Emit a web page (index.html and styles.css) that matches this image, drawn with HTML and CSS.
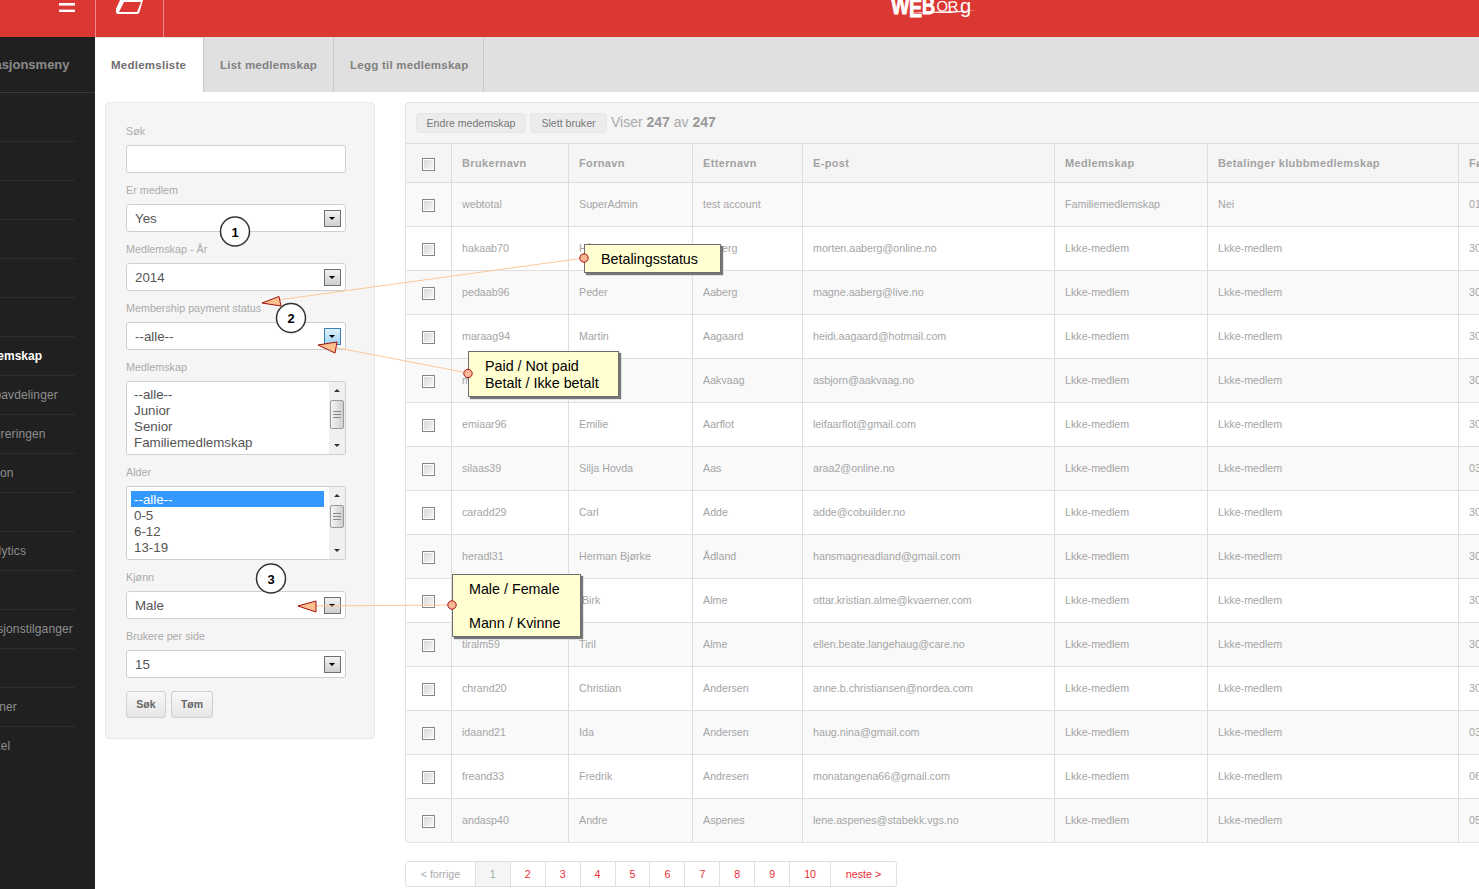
FILE: index.html
```html
<!DOCTYPE html>
<html lang="no">
<head>
<meta charset="utf-8">
<title>Medlemsliste</title>
<link rel="stylesheet" href="styles.css">
</head>
<body>
<div class="page">
  <header class="topbar">
    <div class="top-cell top-menu">
      <svg class="icon-menu" width="16" height="12" viewBox="0 0 16 12"><rect x="0" y="3" width="16" height="2.6" fill="#fff"/><rect x="0" y="9.6" width="16" height="2.6" fill="#fff"/></svg>
    </div>
    <div class="top-cell top-book">
      <svg width="27" height="14" viewBox="0 0 27 14"><path fill-rule="evenodd" d="M4 0 H27 L23.500 12 Q23 14 21 14 H2 Q0 14 0 12 V9 Z M8 2 L3 12 H21 L25 2 Z" fill="#fff"/></svg>
    </div>
    <svg class="logo" width="90" height="22" viewBox="0 0 90 22">
      <g class="logo-web">
        <text transform="translate(1,14) scale(.82,1)">W</text>
        <text transform="translate(19,17) scale(.82,1.1)">E</text>
        <text transform="translate(32,14) scale(.76,1)">B</text>
      </g>
      <g class="logo-org">
        <text transform="translate(47,12) rotate(-6)">O</text>
        <text transform="translate(58,12) rotate(-4)">R</text>
        <text class="logo-g" transform="translate(70,13)">g</text>
      </g>
      <path d="M15 12.500 L86 10.500 L60 13 Z" fill="#fff"/>
    </svg>
  </header>
  <div class="layout">
    <nav class="sidebar">
      <div class="side-title"><span class="side-title-text">Navigasjonsmeny</span></div>
      <ul class="side-list">
        <li class="side-item"></li>
        <li class="side-item"></li>
        <li class="side-item"></li>
        <li class="side-item"></li>
        <li class="side-item"></li>
        <li class="side-item"></li>
        <li class="side-item side-active">Medlemskap</li>
        <li class="side-item">Klubbavdelinger</li>
        <li class="side-item">Faktureringen</li>
        <li class="side-item">Seksjon</li>
        <li class="side-item"></li>
        <li class="side-item">&nbsp;&nbsp;Analytics</li>
        <li class="side-item"></li>
        <li class="side-item">Funksjonstilganger</li>
        <li class="side-item"></li>
        <li class="side-item">Kartoner</li>
        <li class="side-item side-last">Artikkel</li>
      </ul>
    </nav>
    <div class="content">
      <div class="tabs">
        <div class="tab tab-active">Medlemsliste</div>
        <div class="tab">List medlemskap</div>
        <div class="tab">Legg til medlemskap</div>
      </div>
      <div class="body-row">
        <form class="filter">
          <div class="label">Søk</div>
          <div class="input"></div>
          <div class="label">Er medlem</div>
          <div class="select"><span>Yes</span><i class="drop"></i></div>
          <div class="label">Medlemskap - År</div>
          <div class="select"><span>2014</span><i class="drop"></i></div>
          <div class="label">Membership payment status</div>
          <div class="select"><span>--alle--</span><i class="drop drop-hover"></i></div>
          <div class="label">Medlemskap</div>
          <div class="listbox">
            <div class="list-items">
              <div class="opt">--alle--</div>
              <div class="opt">Junior</div>
              <div class="opt">Senior</div>
              <div class="opt">Familiemedlemskap</div>
              <div class="opt">Trippelmedlemskap</div>
            </div>
            <div class="scroll"><b class="arr-up"></b><b class="thumb"></b><b class="arr-down"></b></div>
          </div>
          <div class="label">Alder</div>
          <div class="listbox">
            <div class="list-items">
              <div class="opt opt-sel">--alle--</div>
              <div class="opt">0-5</div>
              <div class="opt">6-12</div>
              <div class="opt">13-19</div>
              <div class="opt">20-39</div>
            </div>
            <div class="scroll"><b class="arr-up"></b><b class="thumb thumb-short"></b><b class="arr-down"></b></div>
          </div>
          <div class="label">Kjønn</div>
          <div class="select"><span>Male</span><i class="drop"></i></div>
          <div class="label">Brukere per side</div>
          <div class="select"><span>15</span><i class="drop"></i></div>
          <div class="btns">
            <div class="btn btn-sok">Søk</div>
            <div class="btn btn-tom">Tøm</div>
          </div>
        </form>
        <div class="main">
          <div class="panel">
            <div class="toolbar">
              <div class="tbtn tbtn-a">Endre medemskap</div>
              <div class="tbtn tbtn-b">Slett bruker</div>
              <div class="count">Viser <b>247</b> av <b>247</b></div>
            </div>
            <table class="grid">
              <colgroup>
                <col class="c0"><col class="c1"><col class="c2"><col class="c3"><col class="c4"><col class="c5"><col class="c6"><col class="c7">
              </colgroup>
              <thead>
                <tr><th><i class="cb"></i></th><th>Brukernavn</th><th>Fornavn</th><th>Etternavn</th><th>E-post</th><th>Medlemskap</th><th>Betalinger klubbmedlemskap</th><th>Fødselsdato</th></tr>
              </thead>
              <tbody>
                <tr><td><i class="cb"></i></td><td>webtotal</td><td>SuperAdmin</td><td>test account</td><td></td><td>Familiemedlemskap</td><td>Nei</td><td>01.01.1970</td></tr>
                <tr><td><i class="cb"></i></td><td>hakaab70</td><td>Håkon</td><td>Aaberg</td><td>morten.aaberg@online.no</td><td>Lkke-medlem</td><td>Lkke-medlem</td><td>30.06.2014</td></tr>
                <tr><td><i class="cb"></i></td><td>pedaab96</td><td>Peder</td><td>Aaberg</td><td>magne.aaberg@live.no</td><td>Lkke-medlem</td><td>Lkke-medlem</td><td>30.06.2014</td></tr>
                <tr><td><i class="cb"></i></td><td>maraag94</td><td>Martin</td><td>Aagaard</td><td>heidi.aagaard@hotmail.com</td><td>Lkke-medlem</td><td>Lkke-medlem</td><td>30.06.2014</td></tr>
                <tr><td><i class="cb"></i></td><td>maraak90</td><td>Asbjørn</td><td>Aakvaag</td><td>asbjorn@aakvaag.no</td><td>Lkke-medlem</td><td>Lkke-medlem</td><td>30.06.2014</td></tr>
                <tr><td><i class="cb"></i></td><td>emiaar96</td><td>Emilie</td><td>Aarflot</td><td>leifaarflot@gmail.com</td><td>Lkke-medlem</td><td>Lkke-medlem</td><td>30.06.2014</td></tr>
                <tr><td><i class="cb"></i></td><td>silaas39</td><td>Silja Hovda</td><td>Aas</td><td>araa2@online.no</td><td>Lkke-medlem</td><td>Lkke-medlem</td><td>03.06.2014</td></tr>
                <tr><td><i class="cb"></i></td><td>caradd29</td><td>Carl</td><td>Adde</td><td>adde@cobuilder.no</td><td>Lkke-medlem</td><td>Lkke-medlem</td><td>30.06.2014</td></tr>
                <tr><td><i class="cb"></i></td><td>heradl31</td><td>Herman Bjørke</td><td>Ådland</td><td>hansmagneadland@gmail.com</td><td>Lkke-medlem</td><td>Lkke-medlem</td><td>30.06.2014</td></tr>
                <tr><td><i class="cb"></i></td><td>biralm54</td><td>&nbsp;Birk</td><td>Alme</td><td>ottar.kristian.alme@kvaerner.com</td><td>Lkke-medlem</td><td>Lkke-medlem</td><td>30.06.2014</td></tr>
                <tr><td><i class="cb"></i></td><td>tiralm59</td><td>Tiril</td><td>Alme</td><td>ellen.beate.langehaug@care.no</td><td>Lkke-medlem</td><td>Lkke-medlem</td><td>30.06.2014</td></tr>
                <tr><td><i class="cb"></i></td><td>chrand20</td><td>Christian</td><td>Andersen</td><td>anne.b.christiansen@nordea.com</td><td>Lkke-medlem</td><td>Lkke-medlem</td><td>30.06.2014</td></tr>
                <tr><td><i class="cb"></i></td><td>idaand21</td><td>Ida</td><td>Andersen</td><td>haug.nina@gmail.com</td><td>Lkke-medlem</td><td>Lkke-medlem</td><td>03.06.2014</td></tr>
                <tr><td><i class="cb"></i></td><td>freand33</td><td>Fredrik</td><td>Andresen</td><td>monatangena66@gmail.com</td><td>Lkke-medlem</td><td>Lkke-medlem</td><td>06.06.2014</td></tr>
                <tr><td><i class="cb"></i></td><td>andasp40</td><td>Andre</td><td>Aspenes</td><td>lene.aspenes@stabekk.vgs.no</td><td>Lkke-medlem</td><td>Lkke-medlem</td><td>05.06.2014</td></tr>
              </tbody>
            </table>
          </div>
          <div class="pager">
            <span class="pg pg-prev">&lt; forrige</span>
            <span class="pg pg-cur">1</span>
            <span class="pg">2</span>
            <span class="pg">3</span>
            <span class="pg">4</span>
            <span class="pg">5</span>
            <span class="pg">6</span>
            <span class="pg">7</span>
            <span class="pg">8</span>
            <span class="pg">9</span>
            <span class="pg pg-10">10</span>
            <span class="pg pg-next">neste &gt;</span>
          </div>
        </div>
      </div>
    </div>
  </div>

  <svg class="notes" width="1479" height="889" viewBox="0 0 1479 889">
    <g class="lines">
      <line x1="278" y1="300" x2="584" y2="258"/>
      <line x1="333" y1="347" x2="468" y2="373"/>
      <line x1="314" y1="606" x2="452" y2="605"/>
    </g>
    <g class="tri">
      <path d="M262 303 L279 296.500 L281 306 Z"/>
      <path d="M318 345 L337 342 L335 353 Z"/>
      <path d="M298 606 L316 601 L316 612 Z"/>
    </g>
    <g class="num">
      <circle cx="235" cy="231.500" r="14.500"/>
      <circle cx="291" cy="318" r="14.500"/>
      <circle cx="271" cy="578.500" r="14.500"/>
    </g>
    <g class="numtext">
      <text x="235" y="236.500">1</text>
      <text x="291" y="323">2</text>
      <text x="271" y="583.500">3</text>
    </g>
  </svg>
  <div class="note note-a">Betalingsstatus</div>
  <div class="note note-b">Paid / Not paid<br>Betalt / Ikke betalt</div>
  <div class="note note-c">Male / Female<br><br>Mann / Kvinne</div>
  <svg class="dots" width="1479" height="889" viewBox="0 0 1479 889">
    <circle cx="584" cy="258" r="4.200"/>
    <circle cx="468" cy="373.500" r="4.200"/>
    <circle cx="452" cy="605" r="4.200"/>
  </svg>
</div>
</body>
</html>
```
FILE: styles.css
```css
* { box-sizing: border-box; }
html, body { margin: 0; padding: 0; height: 100%; overflow: hidden; background: #fff; }
body { font-family: "Liberation Sans", Arial, sans-serif; color: #999; }
.page { position: relative; width: 1479px; height: 889px; overflow: hidden; }

/* top bar */
.topbar { display: flex; align-items: flex-start; height: 37px; background: #db3833; position: relative; }
.top-cell { height: 37px; border-right: 1px solid #f08a86; display: flex; }
.top-menu { width: 96px; padding: 0 0 0 59px; }
.icon-menu { display: block; margin-top: 0; }
.top-book { width: 68px; padding-left: 20px; align-items: flex-start; }
.logo { margin-left: 726px; display: block; overflow: hidden; }
.logo-web text { font-family: "Liberation Sans", sans-serif; font-weight: 700; font-size: 24px; fill: #fff; stroke: #fff; stroke-width: .8px; }
.logo-org text { font-family: "Liberation Sans", sans-serif; font-size: 15px; fill: #fff; }
.logo-org .logo-g { font-size: 20px; }

.layout { display: flex; height: 852px; }

/* sidebar */
.sidebar { width: 95px; flex: none; background: #202020; overflow: hidden; }
.side-title { height: 56px; border-bottom: 1px solid #3a3a3a; padding-top: 20px; overflow: hidden; }
.side-title-text { display: block; margin-left: -41px; width: 136px; font-size: 13px; line-height: 16px; font-weight: 700; color: #8b8b8b; white-space: nowrap; }
.side-list { list-style: none; margin: 10px 0 0 -30px; padding: 0; width: 105px; }
.side-item { height: 39px; line-height: 38px; border-bottom: 1px solid #2e2e2e; font-size: 12px; letter-spacing: .12px; color: #8e8e8e; white-space: nowrap; }
.side-active { color: #fff; font-weight: 700; letter-spacing: 0; }
.side-last { border-bottom: 0; }

/* content */
.content { flex: 1; min-width: 0; overflow: hidden; }
.tabs { display: flex; height: 55px; background: #e1e0e0; }
.tab { padding: 0 16px; line-height: 56px; font-size: 11.500px; font-weight: 700; color: #808080; border-right: 1px solid #c9c9c9; letter-spacing: .25px; white-space: nowrap; }
.tab-active { width: 109px; background: #fff; color: #6f6f6f; padding-right: 0; border-top: 1px solid #ddd; line-height: 55px; }
.tab:nth-child(2) { width: 130px; }
.tab:nth-child(3) { width: 150px; }
.body-row { display: flex; align-items: flex-start; padding: 10px 0 0 10px; }

/* filter */
.filter { width: 270px; flex: none; height: 637px; background: #f5f5f5; border: 1px solid #e9e9e9; border-radius: 4px; padding: 21px 28px 20px 20px; }
.label { height: 14px; line-height: 14px; font-size: 10.750px; color: #ababab; margin-bottom: 7px; white-space: nowrap; }
.input, .select { height: 28px; background: #fff; border: 1px solid #cfcfcf; border-radius: 3px; margin-bottom: 10px; }
.select { display: flex; align-items: center; justify-content: space-between; padding: 0 4px 0 8px; font-size: 13.330px; color: #555; }
.drop { display: block; width: 17px; height: 17px; border: 1px solid #6f6f6f; background: linear-gradient(#f2f2f2, #cfcfcf); position: relative; }
.drop::after { content: ""; position: absolute; left: 4px; top: 6px; border: 3.500px solid transparent; border-top: 3.500px solid #000; border-bottom: 0; }
.drop-hover { border-color: #3c7fb1; background: linear-gradient(#dcf0fb, #a3d3f1); }
.listbox { height: 74px; background: #fff; border: 1px solid #cfcfcf; border-radius: 2px; margin-bottom: 10px; display: flex; overflow: hidden; }
.list-items { flex: 1; min-width: 0; padding: 4px 5px 0 4px; overflow: hidden; }
.opt { height: 16px; line-height: 18px; font-size: 13.330px; color: #555; padding-left: 3px; white-space: nowrap; }
.opt-sel { background: #3399ff; color: #fff; }
.scroll { width: 16px; flex: none; background: #f0f0f0; display: flex; flex-direction: column; align-items: center; padding-top: 7px; }
.arr-up { flex: none; width: 0; height: 0; border: 3px solid transparent; border-bottom: 3px solid #333; border-top: 0; }
.arr-down { flex: none; width: 0; height: 0; border: 3px solid transparent; border-top: 3px solid #333; border-bottom: 0; margin-top: auto; margin-bottom: 7px; }
.thumb { flex: none; width: 14px; height: 29px; margin-top: 8px; border: 1px solid #9a9a9a; border-radius: 2px; background: repeating-linear-gradient(#8a8a8a 0 1px, transparent 1px 3px) center / 8px 8px no-repeat, linear-gradient(90deg, #f4f4f4, #cfcfcf); }
.thumb-short { height: 23px; }
.btns { display: flex; gap: 5px; margin-top: 13px; }
.btn { height: 27px; line-height: 25px; border: 1px solid #cfcfcf; border-radius: 3px; background: linear-gradient(#f8f8f8, #e6e6e6); font-size: 10.500px; font-weight: 700; color: #666; text-align: center; }
.btn-sok { width: 40px; }
.btn-tom { width: 42px; }

/* main */
.main { margin-left: 30px; width: 1200px; flex: none; }
.panel { height: 741px; background: #f5f5f5; border: 1px solid #e2e2e2; border-right: 0; border-radius: 4px 0 0 4px; overflow: hidden; }
.toolbar { height: 41px; display: flex; align-items: flex-start; padding: 10px 0 0 10px; border-bottom: 1px solid #dedede; }
.tbtn { height: 20px; line-height: 18px; background: #ececec; border: 1px solid #e6e6e6; border-radius: 4px; font-size: 10.600px; color: #777; text-align: center; }
.tbtn-a { width: 110px; }
.tbtn-b { width: 77px; margin-left: 4px; }
.count { margin-left: 4px; font-size: 14px; line-height: 18px; color: #aaa; }
.count b { color: #999; }
.grid { border-collapse: separate; border-spacing: 0; table-layout: fixed; width: 1200px; }
.c0 { width: 46px; } .c1 { width: 117px; } .c2 { width: 124px; } .c3 { width: 110px; }
.c4 { width: 252px; } .c5 { width: 153px; } .c6 { width: 251px; } .c7 { width: 147px; }
.grid th, .grid td { border-right: 1px solid #dedede; border-bottom: 1px solid #dedede; padding: 0 10px; text-align: left; white-space: nowrap; overflow: hidden; }
.grid th { height: 39px; font-size: 11px; font-weight: 700; color: #a3a3a3; background: #f5f5f5; letter-spacing: .35px; }
.grid td { height: 44px; padding-bottom: 2px; font-size: 10.700px; color: #a5a5a5; background: #fff; }
.grid tbody tr:nth-child(odd) td { background: #f9f9f9; }
.grid th:first-child, .grid td:first-child { padding: 0 0 0 16px; }
.cb { display: block; width: 13px; height: 13px; border: 1px solid #858585; background: linear-gradient(135deg, #d6d6d6, #f8f8f8); box-shadow: inset 0 0 0 1px #fff; margin-top: 2px; }
.pager { display: flex; width: 492px; height: 26px; margin-top: 18px; border: 1px solid #dfdfdf; border-radius: 3px; font-size: 10.700px; }
.pg { width: 35px; line-height: 24px; text-align: center; color: #ee2b34; border-right: 1px solid #dfdfdf; }
.pg-prev { width: 70px; color: #aaa; }
.pg-cur { background: #f5f5f5; color: #9fb09f; }
.pg-10 { width: 41px; }
.pg-next { width: 65px; border-right: 0; }

/* annotation overlay */
.notes, .dots { position: absolute; left: 0; top: 0; pointer-events: none; }
.lines line { stroke: #fbc898; stroke-width: 1; }
.tri path { fill: #fdc08e; stroke: #a30f0f; stroke-width: 1; }
.num circle { fill: #fff; stroke: #333; stroke-width: 1.500; }
.numtext text { font: 700 13px "Liberation Sans", sans-serif; fill: #000; text-anchor: middle; }
.dots circle { fill: #f8b894; stroke: #a30f0f; stroke-width: 1; }
.note { position: absolute; background: #ffffd2; border: 1px solid #6e6e6e; box-shadow: 2px 2px 1px #777; font-size: 14.300px; line-height: 17px; color: #000; white-space: nowrap; }
.note-a { left: 584px; top: 244px; width: 137px; height: 29px; padding: 6px 0 0 16px; }
.note-b { left: 468px; top: 351px; width: 151px; height: 46px; padding: 6px 0 0 16px; }
.note-c { left: 452px; top: 574px; width: 129px; height: 63px; padding: 6px 0 0 16px; }
```
